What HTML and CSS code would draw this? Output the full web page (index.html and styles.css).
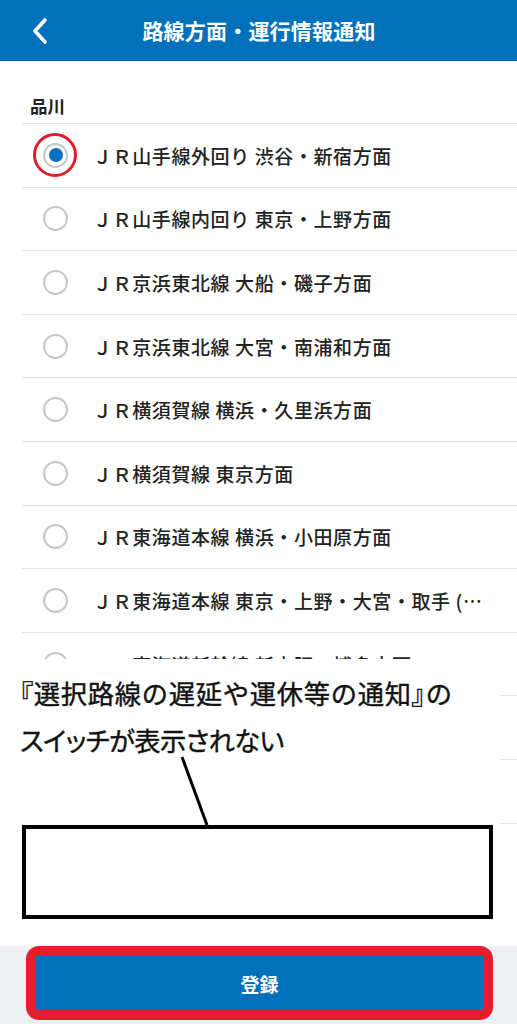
FILE: index.html
```html
<!DOCTYPE html>
<html lang="ja">
<head>
<meta charset="utf-8">
<title>路線方面・運行情報通知</title>
<link rel="stylesheet" href="styles.css">
</head>
<body>
<div class="app">
  <header class="topbar">
    <button class="back" aria-label="戻る">
      <svg width="18" height="28" viewBox="0 0 18 28"><path d="M14 3 L4 14 L14 25" fill="none" stroke="#fff" stroke-width="3.6" stroke-linecap="round" stroke-linejoin="round"/></svg>
    </button>
    <h1 class="title">路線方面・運行情報通知</h1>
    <span class="spacer"></span>
  </header>

  <main class="content">
    <div class="section-label">品川</div>
    <ul class="list">
      <li class="row"><span class="radio selected"><span class="ring"></span><span class="dot"></span></span><span class="label">ＪＲ山手線外回り 渋谷・新宿方面</span></li>
      <li class="row"><span class="radio"></span><span class="label">ＪＲ山手線内回り 東京・上野方面</span></li>
      <li class="row"><span class="radio"></span><span class="label">ＪＲ京浜東北線 大船・磯子方面</span></li>
      <li class="row"><span class="radio"></span><span class="label">ＪＲ京浜東北線 大宮・南浦和方面</span></li>
      <li class="row"><span class="radio"></span><span class="label">ＪＲ横須賀線 横浜・久里浜方面</span></li>
      <li class="row"><span class="radio"></span><span class="label">ＪＲ横須賀線 東京方面</span></li>
      <li class="row"><span class="radio"></span><span class="label">ＪＲ東海道本線 横浜・小田原方面</span></li>
      <li class="row"><span class="radio"></span><span class="label">ＪＲ東海道本線 東京・上野・大宮・取手 (…</span></li>
      <li class="row"><span class="radio"></span><span class="label">ＪＲ東海道新幹線 新大阪・博多方面</span></li>
      <li class="row"><span class="radio"></span><span class="label">ＪＲ東海道新幹線 名古屋方面</span></li>
      <li class="row"><span class="radio"></span><span class="label">ＪＲ東海道新幹線 東京方面</span></li>
    </ul>

    <div class="annotation">
      <p class="note"><span class="note-line1"><span class="bracket">『</span>選択路線の遅延や運休等の通知<span class="bracket">』</span>の</span><span class="note-line2">スイッチが表示されない</span></p>
      <svg class="pointer" width="40" height="80" viewBox="0 0 40 80"><line x1="6" y1="4" x2="31" y2="72" stroke="#000" stroke-width="3"/></svg>
      <div class="empty-box"></div>
    </div>
  </main>

  <footer class="bottombar">
    <div class="highlight">
      <button class="submit">登録</button>
    </div>
  </footer>
</div>
</body>
</html>
```

FILE: styles.css
```css
* { box-sizing: border-box; }
html, body { margin: 0; padding: 0; }
body {
  font-family: "Noto Sans CJK JP", "Noto Sans", sans-serif;
  background: #fff;
  color: #222;
}
.app {
  width: 517px;
  height: 1024px;
  display: flex;
  flex-direction: column;
  overflow: hidden;
  background: #fff;
}
.topbar {
  height: 61px;
  flex: 0 0 61px;
  background: #0071ba;
  display: flex;
  align-items: center;
  padding: 0 14px 0 29px;
  border-bottom: 1px solid #0b62a0;
}
.back {
  width: 22px;
  height: 30px;
  padding: 0;
  border: 0;
  background: none;
  display: flex;
  align-items: center;
  justify-content: center;
  margin-top: 2px;
}
.title {
  flex: 1;
  margin: 0;
  text-align: center;
  color: #fff;
  font-size: 21px;
  font-weight: 700;
  letter-spacing: 0.2px;
  padding-right: 14px;
}
.spacer { width: 22px; }

.content {
  flex: 1;
  position: relative;
  overflow: hidden;
}
.section-label {
  height: 63px;
  margin-left: 22px;
  padding: 0 0 5px 8px;
  display: flex;
  align-items: flex-end;
  font-size: 17.5px;
  font-weight: 700;
  color: #222;
  border-bottom: 1px solid #e4e4e4;
}
.list {
  list-style: none;
  margin: 0 0 0 22px;
  padding: 0;
}
.row {
  height: 63.6px;
  display: flex;
  align-items: center;
  border-bottom: 1px solid #e4e4e4;
  padding-left: 21px;
  white-space: nowrap;
  overflow: hidden;
}
.radio {
  position: relative;
  width: 25px;
  height: 25px;
  flex: 0 0 25px;
  border-radius: 50%;
  border: 2.5px solid #c6c6c6;
}
.radio.selected {
  border-color: #c2c8ce;
  display: flex;
  align-items: center;
  justify-content: center;
}
.radio .dot {
  width: 14px;
  height: 14px;
  border-radius: 50%;
  background: #0a6fbe;
}
.radio .ring {
  position: absolute;
  left: -12px;
  top: -12px;
  width: 44px;
  height: 44px;
  border-radius: 50%;
  border: 3.5px solid #de1f2a;
}
.label {
  margin-left: 25px;
  font-size: 19px;
  font-weight: 500;
  letter-spacing: 0.6px;
  color: #222;
}

.annotation {
  position: absolute;
  left: 0;
  top: 598px;
  width: 500px;
  height: 287px;
  background: #fff;
  display: flex;
  flex-direction: column;
}
.note {
  margin: 0;
  padding: 10px 0 0 20px;
  font-size: 26.3px;
  line-height: 47px;
  font-weight: 400;
  color: #111;
  -webkit-text-stroke: 0.4px #111;
}
.note-line1, .note-line2 { display: block; white-space: nowrap; }
.note-line1 { letter-spacing: 0.7px; }
.bracket { font-feature-settings: "palt"; }
.note-line2 { font-feature-settings: "palt"; letter-spacing: -0.6px; }
.pointer {
  position: absolute;
  left: 176px;
  top: 94px;
}
.empty-box {
  margin: 62px 0 0 22px;
  width: 471px;
  height: 94px;
  border: 4px solid #000;
  background: #fff;
}

.bottombar {
  flex: 0 0 78px;
  height: 78px;
  background: #eff0f3;
  padding: 0 0 0 26px;
}
.highlight {
  width: 467px;
  height: 74px;
  border: 10px solid #e41e2b;
  border-radius: 13px;
  background: #0071ba;
}
.submit {
  width: 100%;
  height: 100%;
  border: 0;
  margin: 0;
  background: #0071ba;
  color: #fff;
  font-family: inherit;
  font-size: 19px;
  font-weight: 700;
}
```
